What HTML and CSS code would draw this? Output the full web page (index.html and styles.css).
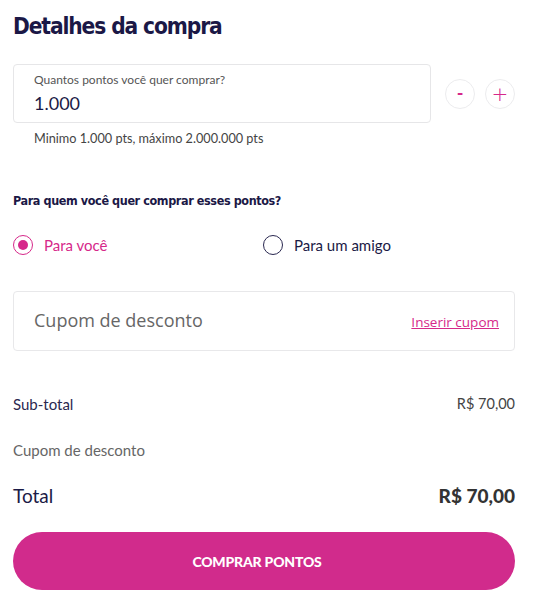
FILE: index.html
```html
<!DOCTYPE html>
<html lang="pt-BR">
<head>
<meta charset="utf-8">
<link rel="stylesheet" href="styles.css">
</head>
<body>
<main class="page">
  <h1 class="title">Detalhes da compra</h1>

  <div class="qty-row">
    <div class="qty-field">
      <span class="qty-label">Quantos pontos você quer comprar?</span>
      <span class="qty-value">1.000</span>
    </div>
    <button class="step minus">-</button>
    <button class="step">+</button>
  </div>
  <p class="hint">Minimo 1.000 pts, máximo 2.000.000 pts</p>

  <h2 class="question">Para quem você quer comprar esses pontos?</h2>
  <div class="radios">
    <label class="radio checked"><span class="dot"></span>Para você</label>
    <label class="radio"><span class="dot"></span>Para um amigo</label>
  </div>

  <div class="coupon">
    <span class="coupon-ph">Cupom de desconto</span>
    <a class="coupon-link" href="#">Inserir cupom</a>
  </div>

  <div class="line sub"><span>Sub-total</span><span class="amount">R$ 70,00</span></div>
  <div class="line disc"><span>Cupom de desconto</span></div>
  <div class="line total"><span>Total</span><strong>R$ 70,00</strong></div>

  <button class="buy">COMPRAR PONTOS</button>
</main>
</body>
</html>
```
FILE: styles.css
```css
* { box-sizing: border-box; }
body {
  margin: 0;
  background: #fff;
  font-family: Lato, "Open Sans", sans-serif;
  color: #1b1a46;
}
.page {
  padding: 0 21px 0 13px;
  display: flex;
  flex-direction: column;
}
.title {
  margin: 12px 0 0;
  font-family: "DejaVu Sans Condensed", "DejaVu Sans", sans-serif;
  font-weight: 700;
  font-size: 22.5px;
  line-height: 28px;
  color: #1b1846;
  letter-spacing: -1.1px;
}
.qty-row {
  margin-top: 24px;
  display: flex;
  align-items: center;
  gap: 10px;
}
.qty-field {
  width: 418px;
  height: 59px;
  border: 1px solid #e6e6e8;
  border-radius: 4px;
  padding: 8px 20px 0;
  display: flex;
  flex-direction: column;
  margin-right: 4px;
}
.qty-label {
  font-size: 12px;
  color: #555;
  line-height: 14px;
}
.qty-value {
  margin-top: 5px;
  font-size: 18px;
  line-height: 22px;
  color: #1b1a46;
}
.step {
  width: 30px;
  height: 30px;
  border-radius: 50%;
  border: 1.5px solid #ececee;
  background: #fff;
  color: #d6288a;
  font-family: "DejaVu Sans", sans-serif;
  font-size: 20px;
  font-weight: 300;
  line-height: 1;
  padding: 0;
  display: flex;
  align-items: center;
  justify-content: center;
}
.step.minus {
  font-family: Lato, sans-serif;
  font-weight: 700;
  font-size: 18px;
  padding-bottom: 2px;
}
.hint {
  margin: 7px 0 0 21px;
  font-size: 12.7px;
  line-height: 16px;
  color: #444;
}
.question {
  margin: 47px 0 0;
  font-family: "DejaVu Sans Condensed", "DejaVu Sans", sans-serif;
  font-weight: 700;
  font-size: 12.5px;
  line-height: 16px;
  letter-spacing: -0.4px;
  color: #1b1846;
}
.radios {
  margin-top: 26px;
  display: grid;
  grid-template-columns: 250px 1fr;
}
.radio {
  display: flex;
  align-items: center;
  gap: 11px;
  font-size: 15px;
  line-height: 20px;
  color: #1b1a46;
}
.radio .dot {
  width: 20px;
  height: 20px;
  border-radius: 50%;
  border: 1.5px solid #2a2850;
  display: flex;
  align-items: center;
  justify-content: center;
}
.radio.checked { color: #d6288a; }
.radio.checked .dot { border-color: #d6288a; }
.radio.checked .dot::after {
  content: "";
  width: 10px;
  height: 10px;
  border-radius: 50%;
  background: #d6288a;
}
.coupon {
  margin-top: 36px;
  height: 60px;
  border: 1px solid #e8e8ea;
  border-radius: 4px;
  display: flex;
  align-items: center;
  justify-content: space-between;
  padding: 0 15px 0 20px;
}
.coupon-ph {
  font-family: "Open Sans", sans-serif;
  font-size: 18px;
  color: #666;
  margin-top: -2px;
}
.coupon-link {
  font-family: "Open Sans", sans-serif;
  font-size: 13.5px;
  color: #d6288a;
  text-decoration: underline;
  margin-top: 2px;
}
.line {
  display: flex;
  justify-content: space-between;
  align-items: center;
}
.sub {
  margin-top: 43px;
  font-size: 15px;
  line-height: 20px;
  color: #2a2850;
}
.sub .amount { color: #444; font-size: 14.5px; }
.disc {
  margin-top: 26px;
  font-size: 15px;
  line-height: 20px;
  color: #666;
}
.total {
  margin-top: 24px;
  font-size: 19px;
  line-height: 24px;
  color: #1b1a46;
}
.total strong {
  font-weight: 900;
  color: #333;
}
.buy {
  margin-top: 24px;
  height: 58px;
  border: none;
  border-radius: 29px;
  background: #d12b8c;
  color: #fff;
  font-family: Lato, sans-serif;
  font-weight: 900;
  font-size: 14px;
  letter-spacing: -0.2px;
  padding: 0 14px 0 0;
}
```
